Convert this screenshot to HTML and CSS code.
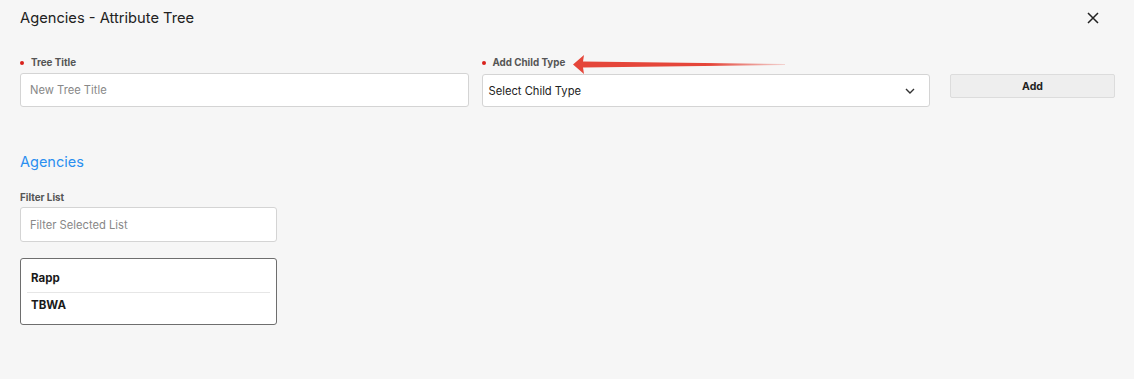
FILE: index.html
```html
<!DOCTYPE html>
<html>
<head>
<meta charset="utf-8">
<link rel="stylesheet" href="styles.css">
</head>
<body>
<div class="modal">
  <header class="modal-header">
    <h1 class="modal-title">Agencies - Attribute Tree</h1>
    <button class="close-btn" aria-label="Close">
      <svg width="12" height="12" viewBox="0 0 12 12"><path d="M1 1L11 11M11 1L1 11" stroke="#222" stroke-width="1.5" fill="none"/></svg>
    </button>
  </header>

  <div class="form-row">
    <div class="field field-wide">
      <label class="label required">Tree Title</label>
      <input class="input" type="text" placeholder="New Tree Title">
    </div>
    <div class="field field-wide field-select">
      <label class="label required">Add Child Type</label>
      <div class="select">
        <span>Select Child Type</span>
        <svg width="10" height="6" viewBox="0 0 10 6"><path d="M1 1L5 5L9 1" stroke="#333" stroke-width="1.4" fill="none"/></svg>
      </div>
      <svg class="annot-arrow" width="220" height="22" viewBox="0 0 220 22">
        <defs>
          <linearGradient id="g" x1="0" y1="0" x2="1" y2="0">
            <stop offset="0" stop-color="#e5463a"/>
            <stop offset="0.65" stop-color="#e5463a"/>
            <stop offset="1" stop-color="#e5463a" stop-opacity="0.2"/>
          </linearGradient>
        </defs>
        <path d="M0 10.5L11 1L10 7.5L212 10L212 11L10 13.5L11 20Z" fill="url(#g)"/>
      </svg>
    </div>
    <div class="field field-btn">
      <button class="add-btn">Add</button>
    </div>
  </div>

  <h2 class="section-title">Agencies</h2>

  <div class="filter">
    <label class="label">Filter List</label>
    <input class="input" type="text" placeholder="Filter Selected List">
  </div>

  <ul class="list">
    <li>Rapp</li>
    <li>TBWA</li>
  </ul>
</div>
</body>
</html>
```

FILE: styles.css
```css
* { box-sizing: border-box; }
html, body { margin: 0; padding: 0; }
body {
  background: #f6f6f6;
  font-family: Inter, "Noto Sans", sans-serif;
  color: #222;
  width: 1134px;
  height: 379px;
  overflow: hidden;
}
.modal { padding: 0 19px 0 20px; }
.modal-header {
  display: flex;
  justify-content: space-between;
  align-items: center;
  height: 35px;
}
.modal-title {
  margin: 0;
  font-size: 14.7px;
  font-weight: 400;
  color: #222;
}
.close-btn {
  border: 0;
  background: none;
  padding: 0;
  margin-right: 16px;
  width: 12px;
  height: 12px;
  display: flex;
}
.form-row {
  display: flex;
  align-items: flex-start;
  margin-top: 21px;
}
.field { display: flex; flex-direction: column; }
.field-wide { width: 450px; }
.field-select { margin-left: 13px; position: relative; }
.field-btn { margin-left: 20px; padding-top: 18px; }
.label {
  font-size: 9.8px;
  font-weight: 700;
  color: #555;
  height: 14px;
  line-height: 14px;
  margin-bottom: 3px;
}
.label.required::before {
  content: "";
  display: inline-block;
  width: 4px;
  height: 4px;
  border-radius: 50%;
  background: #d9211c;
  margin: 0 7px 1px 0;
  vertical-align: middle;
}
.input {
  width: 100%;
  height: 34px;
  border: 1px solid #d4d4d4;
  border-radius: 3px;
  background: #fff;
  padding: 0 9px;
  font-family: inherit;
  font-size: 11.2px;
  color: #222;
  outline: none;
}
.input::placeholder { color: #888; }
.select {
  height: 33px;
  border: 1px solid #d4d4d4;
  border-radius: 3px;
  background: #fff;
  padding: 0 14px 0 6px;
  display: flex;
  align-items: center;
  justify-content: space-between;
  font-size: 11.2px;
  color: #222;
  margin-top: 1px;
}
.annot-arrow {
  position: absolute;
  left: 91px;
  top: -2px;
}
.add-btn {
  width: 165px;
  height: 24px;
  background: #eeeeee;
  border: 1px solid #dcdcdc;
  border-radius: 2px;
  font-family: inherit;
  font-size: 10.5px;
  font-weight: 700;
  color: #222;
  padding: 0;
}
.section-title {
  margin: 45px 0 0;
  font-size: 14.5px;
  font-weight: 400;
  color: #2a8ff0;
  line-height: 20px;
}
.filter {
  width: 257px;
  display: flex;
  flex-direction: column;
  margin-top: 19px;
}
.filter .label { margin-bottom: 2px; }
.filter .input { height: 35px; }
.list {
  list-style: none;
  margin: 16px 0 0;
  padding: 7px 6px 6px;
  width: 257px;
  border: 1px solid #6e6e6e;
  border-radius: 3px;
  background: #fff;
}
.list li {
  font-size: 11.5px;
  font-weight: 700;
  color: #1a1a1a;
  height: 26px;
  line-height: 24px;
  padding-left: 4px;
}
.list li + li { border-top: 1px solid #e6e6e6; }
```
